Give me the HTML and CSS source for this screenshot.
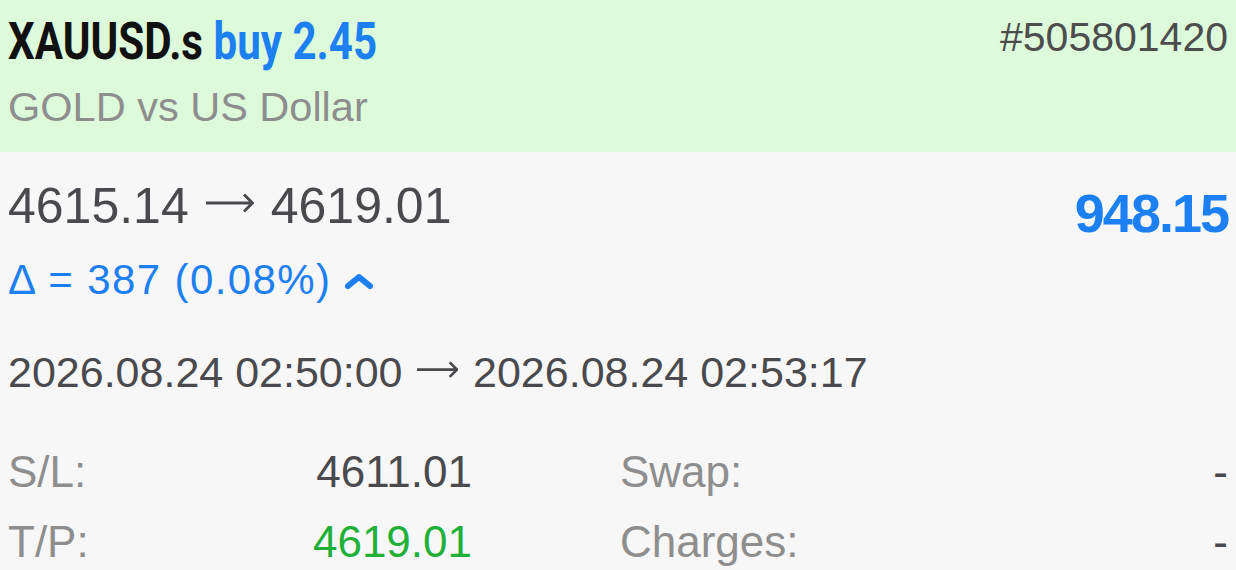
FILE: index.html
```html
<!DOCTYPE html>
<html lang="en">
<head>
<meta charset="UTF-8" />
<meta name="viewport" content="width=device-width, initial-scale=1" />
<title>XAUUSD.s - Position</title>
<link rel="stylesheet" href="styles.css">
</head>
<body>

<header class="deal-head">
  <div class="head-row">
    <div class="title"><span class="symbol">XAUUSD.s</span> <span class="side">buy 2.45</span></div>
    <div class="ticket">#505801420</div>
  </div>
  <div class="desc">GOLD vs US Dollar</div>
</header>

<main class="deal-body">
  <div class="price-row">
    <div class="prices">4615.14<svg class="arrow" viewBox="0 0 48 20" aria-label="to"><path d="M0 10H46M38 1.5L46.5 10L38 18.5" fill="none" stroke="currentColor" stroke-width="3"/></svg>4619.01</div>
    <div class="profit">948.15</div>
  </div>
  <div class="delta">
    &Delta; = 387 (0.08%)
    <svg class="chevron" width="28" height="16" viewBox="0 0 28 16">
      <polyline points="3,13 14,4 25,13" fill="none" stroke="#1c7ff2" stroke-width="6" stroke-linecap="round" stroke-linejoin="round"/>
    </svg>
  </div>
  <div class="times">2026.08.24 02:50:00<svg class="arrow" viewBox="0 0 48 20" aria-label="to"><path d="M0 10H46M38 1.5L46.5 10L38 18.5" fill="none" stroke="currentColor" stroke-width="3"/></svg>2026.08.24 02:53:17</div>

  <div class="stats">
    <div class="label">S/L:</div>
    <div class="value">4611.01</div>
    <div class="label second">Swap:</div>
    <div class="value">-</div>

    <div class="label">T/P:</div>
    <div class="value green">4619.01</div>
    <div class="label second">Charges:</div>
    <div class="value">-</div>
  </div>
</main>

</body>
</html>
```

FILE: styles.css
```css
body {
  margin: 0;
  padding: 0;
  background: #f7f7f7;
  font-family: "Liberation Sans", Arial, sans-serif;
  color: #4a4a4e;
  overflow: hidden;
}
.deal-head {
  background: #ddfbdb;
  padding: 12px 8px 21px 8px;
}
.head-row {
  display: flex;
  justify-content: space-between;
  align-items: flex-start;
}
.title {
  font-family: Roboto, sans-serif;
  font-weight: 700;
  font-size: 52px;
  line-height: 60px;
  display: inline-block;
  transform: scaleX(0.81);
  transform-origin: left center;
  white-space: nowrap;
}
.symbol {
  color: #111;
}
.side {
  color: #1c7ff2;
}
.ticket {
  font-size: 41px;
  line-height: 46px;
  margin-top: 2px;
  color: #4d4d4d;
}
.desc {
  margin-top: 11px;
  font-size: 41.5px;
  line-height: 48px;
  color: #8e8e8e;
}
.deal-body {
  padding: 24px 8px 0 8px;
}
.price-row {
  display: flex;
  justify-content: space-between;
  align-items: flex-start;
  height: 60px;
}
.prices {
  font-size: 50px;
  line-height: 60px;
}
.arrow {
  width: 0.96em;
  height: 0.4em;
  margin: 0 0.34em;
  vertical-align: 0.2em;
}
.profit {
  padding-top: 7px;
  font-size: 54px;
  line-height: 60px;
  font-weight: 700;
  letter-spacing: -2px;
  color: #1c7ff2;
}
.delta {
  margin-top: 20px;
  font-size: 42px;
  line-height: 48px;
  letter-spacing: 1.4px;
  color: #1c7ff2;
  display: flex;
  align-items: center;
  gap: 14px;
}
.chevron {
  margin-top: 2px;
}
.times {
  margin-top: 43px;
  font-size: 43px;
  line-height: 50px;
}
.stats {
  margin-top: 40px;
  display: grid;
  grid-template-columns: 200px 264px 1fr auto;
  font-size: 44px;
  line-height: 70px;
}
.label {
  color: #8e8e8e;
}
.label.second {
  padding-left: 148px;
}
.value {
  text-align: right;
}
.green {
  color: #20b038;
}
```
